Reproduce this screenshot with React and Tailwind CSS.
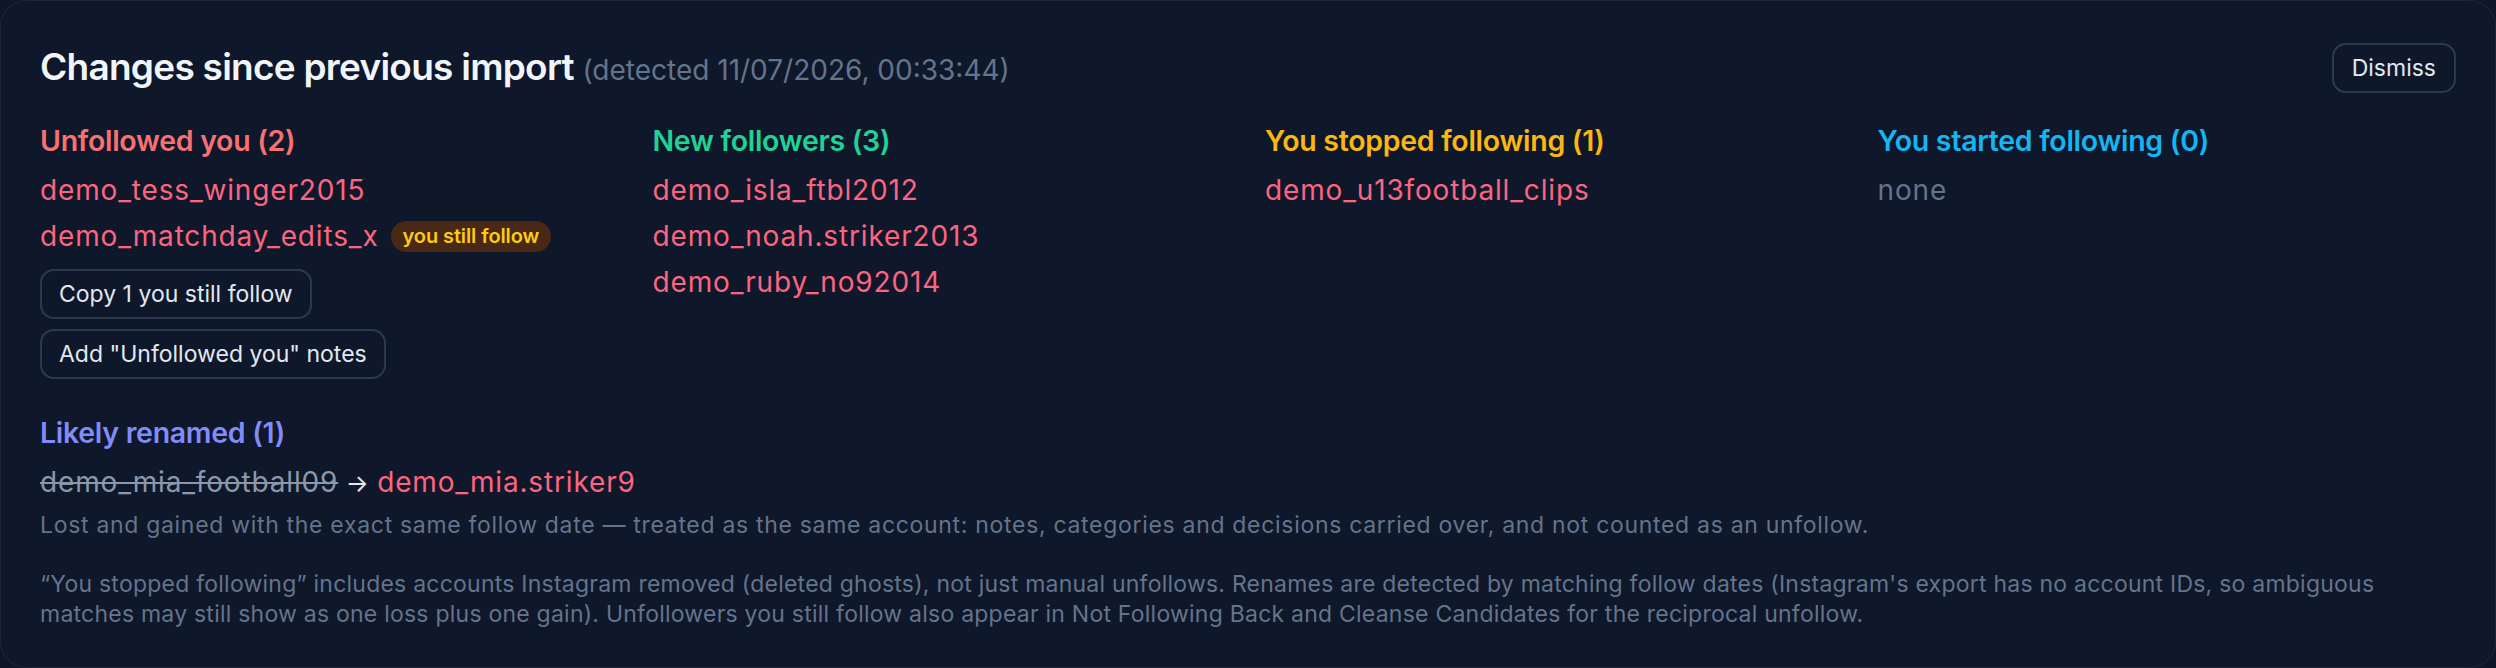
const columns = [
  { title: 'Unfollowed you (2)', color: 'text-[#f87171]', names: ['demo_tess_winger2015', 'demo_matchday_edits_x'], badge: 1, actions: true },
  { title: 'New followers (3)', color: 'text-[#1fd394]', names: ['demo_isla_ftbl2012', 'demo_noah.striker2013', 'demo_ruby_no92014'] },
  { title: 'You stopped following (1)', color: 'text-[#f9b711]', names: ['demo_u13football_clips'] },
  { title: 'You started following (0)', color: 'text-[#14b6f2]', names: [] },
];

const Column = ({ col }) => (
  <div className="flex flex-col">
    <h3 className={`text-[28.5px] leading-[40px] font-semibold tracking-[-0.01em] ${col.color}`}>{col.title}</h3>
    <div className="mt-[9px] flex flex-col gap-[6px]">
      {col.names.length === 0 && <div className="text-[28px] leading-[40px] tracking-[0.03em] text-[#64748b]">none</div>}
      {col.names.map((n, i) => (
        <div key={n} className="flex items-center h-[40px]">
          <span className="text-[28px] leading-[40px] tracking-[0.03em] text-[#fb6580]">{n}</span>
          {col.badge === i && (
            <span className="ml-[12px] h-[31px] px-[12px] flex items-center rounded-full bg-[#4a2816] text-[#facc15] text-[20px] font-semibold tracking-[-0.005em]">
              you still follow
            </span>
          )}
        </div>
      ))}
    </div>
    {col.actions && (
      <div className="mt-[13px] flex flex-col items-start gap-[10px]">
        <button className="h-[50px] px-[17px] rounded-[14px] border-2 border-[#2c3a50] text-[23px] text-[#e2e8f0]">Copy 1 you still follow</button>
        <button className="h-[50px] px-[17px] rounded-[14px] border-2 border-[#2c3a50] text-[23px] text-[#e2e8f0]">Add "Unfollowed you" notes</button>
      </div>
    )}
  </div>
);

export default function App() {
  return (
    <div className="h-[668px] w-full bg-[#0d1526] font-['Inter','Noto_Sans',sans-serif]">
      <div className="h-full rounded-[26px] border border-[#1c2638] bg-[#0f172a] px-[39px] pt-[42px] pb-[40px] flex flex-col">
        {/* header */}
        <div className="flex items-center justify-between h-[50px]">
          <h2 className="text-[37px] leading-[48px] font-semibold text-[#f1f5f9] tracking-[-0.02em]">
            Changes since previous import{' '}
            <span className="text-[28px] font-normal text-[#64748b] tracking-normal">(detected 11/07/2026, 00:33:44)</span>
          </h2>
          <button className="h-[50px] px-[18px] rounded-[14px] border-2 border-[#2c3a50] text-[23px] text-[#e2e8f0]">Dismiss</button>
        </div>

        {/* change columns */}
        <div className="mt-[28px] grid grid-cols-4 gap-x-[34px]">
          {columns.map((c) => (
            <Column key={c.title} col={c} />
          ))}
        </div>

        {/* renames */}
        <div className="mt-[34px]">
          <h3 className="text-[28.5px] leading-[40px] font-semibold text-[#818cf8] tracking-[-0.01em]">Likely renamed (1)</h3>
          <div className="mt-[9px] text-[28px] leading-[40px] tracking-[0.03em]">
            <span className="text-[#8b97aa] line-through">demo_mia_football09</span>
            <span className="text-[#e2e8f0] text-[24px]"> → </span>
            <span className="text-[#fb6580]">demo_mia.striker9</span>
          </div>
          <p className="mt-[6px] text-[23px] leading-[30px] tracking-[0.03em] text-[#64748b]">
            Lost and gained with the exact same follow date — treated as the same account: notes, categories and decisions carried over, and not counted as an unfollow.
          </p>
        </div>

        <p className="mt-[29px] text-[23px] leading-[30px] tracking-[0.01em] text-[#64748b]">
          “You stopped following” includes accounts Instagram removed (deleted ghosts), not just manual unfollows. Renames are detected by matching follow dates (Instagram's export has no account IDs, so ambiguous matches may still show as one loss plus one gain). Unfollowers you still follow also appear in Not Following Back and Cleanse Candidates for the reciprocal unfollow.
        </p>
      </div>
    </div>
  );
}
